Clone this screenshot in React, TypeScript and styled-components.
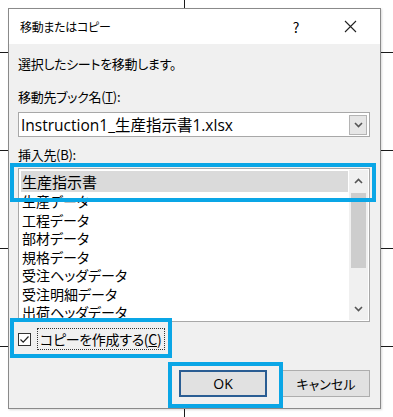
import styled, { createGlobalStyle } from 'styled-components'

const GlobalStyle = createGlobalStyle`
  html, body {
    margin: 0;
    padding: 0;
    background: #ffffff;
  }
  body {
    font-family: "Open Sans", "Noto Sans CJK JP", sans-serif;
    color: #000;
  }
`

const Sheet = styled.div`
  position: relative;
  width: 393px;
  height: 417px;
  overflow: hidden;
  padding: 8px 0 0 8px;
  box-sizing: border-box;
  background:
    linear-gradient(90deg, transparent 184px, #1a1a1a 184px, #1a1a1a 185px, transparent 185px),
    repeating-linear-gradient(180deg, transparent 0, transparent 52px, #1a1a1a 52px, #1a1a1a 53px, transparent 53px, transparent 98px),
    #ffffff;
`

const Dialog = styled.div`
  width: 373px;
  border: 1px solid #8a8a8a;
  box-sizing: border-box;
  background: #f0f0f0;
  box-shadow: 1px 1px 2px rgba(0, 0, 0, 0.15);
`

const TitleBar = styled.div`
  height: 35px;
  background: #ffffff;
  display: flex;
  align-items: center;
  padding-left: 11px;
  font-family: "Noto Sans CJK JP", sans-serif;
  font-feature-settings: "palt";
  font-size: 12px;
`

const Title = styled.span`
  flex: 1;
  letter-spacing: -0.3px;
`

const TitleButton = styled.span<{ $gap: number }>`
  width: 34px;
  display: flex;
  align-items: center;
  justify-content: center;
  font-size: 14px;
  margin-right: ${p => p.$gap}px;
`

const Body = styled.div`
  padding: 0 10px 11px 9px;
  display: flex;
  flex-direction: column;
  font-family: "Noto Sans CJK JP", sans-serif;
  font-feature-settings: "palt";
`

const Label = styled.div<{ $top: number }>`
  margin-top: ${p => p.$top}px;
  height: 20px;
  line-height: 20px;
  font-size: 13px;
  letter-spacing: -0.3px;

  u {
    text-underline-offset: 1px;
  }
`

const Combo = styled.div`
  margin-top: 5px;
  height: 25px;
  box-sizing: border-box;
  border: 1px solid #a8a8a8;
  background: #ffffff;
  display: flex;
  align-items: center;
  padding: 0 2px;
`

const ComboText = styled.span`
  flex: 1;
  font-family: "Open Sans", "Noto Sans CJK JP", sans-serif;
  font-size: 15.5px;
`

const DropButton = styled.div`
  width: 18px;
  height: 20px;
  box-sizing: border-box;
  border: 1px solid #b4b4b4;
  background: #e6e6e6;
  display: flex;
  align-items: center;
  justify-content: center;
`

const ListBox = styled.div`
  margin-top: 3px;
  height: 154px;
  box-sizing: border-box;
  border: 1px solid #a8a8a8;
  background: #ffffff;
  display: flex;
  overflow: hidden;
`

const Items = styled.div`
  flex: 1;
  padding: 2px 1px 0 2px;
  display: flex;
  flex-direction: column;
`

const Item = styled.div<{ $selected?: boolean }>`
  height: ${p => (p.$selected ? 21 : 18.5)}px;
  line-height: ${p => (p.$selected ? 21 : 18.5)}px;
  padding-left: 1px;
  font-size: ${p => (p.$selected ? 15 : 14)}px;
  background: ${p => (p.$selected ? '#dadada' : 'transparent')};
  white-space: nowrap;
`

const ScrollBar = styled.div`
  width: 19px;
  margin: 1px 1px 1px 0;
  background: #f0f0f0;
  display: flex;
  flex-direction: column;
`

const ScrollArrow = styled.div`
  height: 22px;
  display: flex;
  align-items: center;
  justify-content: center;
`

const Track = styled.div`
  flex: 1;
  display: flex;
  flex-direction: column;
`

const Thumb = styled.div`
  margin: 1px 2px 0;
  height: 75px;
  background: #cdcdcd;
`

const CheckRow = styled.div`
  margin-top: 6px;
  height: 22px;
  display: flex;
  align-items: center;
  gap: 6px;
`

const CheckBox = styled.div`
  width: 13px;
  height: 13px;
  box-sizing: border-box;
  border: 1px solid #333333;
  background: #ffffff;
  display: flex;
  align-items: center;
  justify-content: center;
`

const CheckLabel = styled.span`
  border: 1px dotted #333333;
  padding: 0 3px 0 2px;
  height: 22px;
  line-height: 21px;
  box-sizing: border-box;
  font-size: 14px;
  letter-spacing: -0.3px;

  u {
    text-underline-offset: 1px;
  }
`

const ButtonRow = styled.div`
  margin-top: 20px;
  display: flex;
  justify-content: flex-end;
  gap: 15px;
`

const Button = styled.button<{ $default?: boolean }>`
  width: 88px;
  height: 27px;
  box-sizing: border-box;
  border: ${p => (p.$default ? '2px solid #2a5d93' : '1px solid #adadad')};
  background: #e1e1e1;
  font-family: "Open Sans", "Noto Sans CJK JP", sans-serif;
  font-feature-settings: "palt";
  font-size: ${p => (p.$default ? 14 : 13)}px;
  color: #000;
  padding: 0;
`

const Highlight = styled.div<{ $x: number; $y: number; $w: number; $h: number }>`
  position: absolute;
  left: ${p => p.$x}px;
  top: ${p => p.$y}px;
  width: ${p => p.$w}px;
  height: ${p => p.$h}px;
  box-sizing: border-box;
  border: 4px solid #0aa6e6;
  pointer-events: none;
`

const Chevron = ({ up }: { up?: boolean }) => (
  <svg width="9" height="6" viewBox="0 0 9 6">
    <polyline
      points={up ? '1,5 4.5,1.5 8,5' : '1,1 4.5,4.5 8,1'}
      fill="none"
      stroke="#555"
      strokeWidth="1.6"
    />
  </svg>
)

const sheets = [
  '生産データ',
  '工程データ',
  '部材データ',
  '規格データ',
  '受注ヘッダデータ',
  '受注明細データ',
  '出荷ヘッダデータ',
]

const App = () => {
  return (
    <>
      <GlobalStyle />
      <Sheet>
        <Dialog>
          <TitleBar>
            <Title>移動またはコピー</Title>
            <TitleButton $gap={20}>?</TitleButton>
            <TitleButton $gap={13}>
              <svg width="13" height="13" viewBox="0 0 13 13">
                <path d="M1 1 L12 12 M12 1 L1 12" stroke="#222" strokeWidth="1.1" />
              </svg>
            </TitleButton>
          </TitleBar>
          <Body>
            <Label $top={10}>選択したシートを移動します。</Label>
            <Label $top={13}>
              移動先ブック名(<u>T</u>):
            </Label>
            <Combo>
              <ComboText>Instruction1_生産指示書1.xlsx</ComboText>
              <DropButton>
                <Chevron />
              </DropButton>
            </Combo>
            <Label $top={8}>挿入先(B):</Label>
            <ListBox>
              <Items>
                <Item $selected>生産指示書</Item>
                {sheets.map(s => (
                  <Item key={s}>{s}</Item>
                ))}
              </Items>
              <ScrollBar>
                <ScrollArrow>
                  <Chevron up />
                </ScrollArrow>
                <Track>
                  <Thumb />
                </Track>
                <ScrollArrow>
                  <Chevron />
                </ScrollArrow>
              </ScrollBar>
            </ListBox>
            <CheckRow>
              <CheckBox>
                <svg width="11" height="11" viewBox="0 0 11 11">
                  <polyline points="1.5,5.5 4.2,8.2 9.5,2.5" fill="none" stroke="#222" strokeWidth="1.2" />
                </svg>
              </CheckBox>
              <CheckLabel>
                コピーを作成する(<u>C</u>)
              </CheckLabel>
            </CheckRow>
            <ButtonRow>
              <Button $default>OK</Button>
              <Button>キャンセル</Button>
            </ButtonRow>
          </Body>
        </Dialog>
        <Highlight $x={10} $y={163} $w={366} $h={39} />
        <Highlight $x={10} $y={318} $w={162} $h={40} />
        <Highlight $x={168} $y={362} $w={115} $h={46} />
      </Sheet>
    </>
  )
}

export default App
